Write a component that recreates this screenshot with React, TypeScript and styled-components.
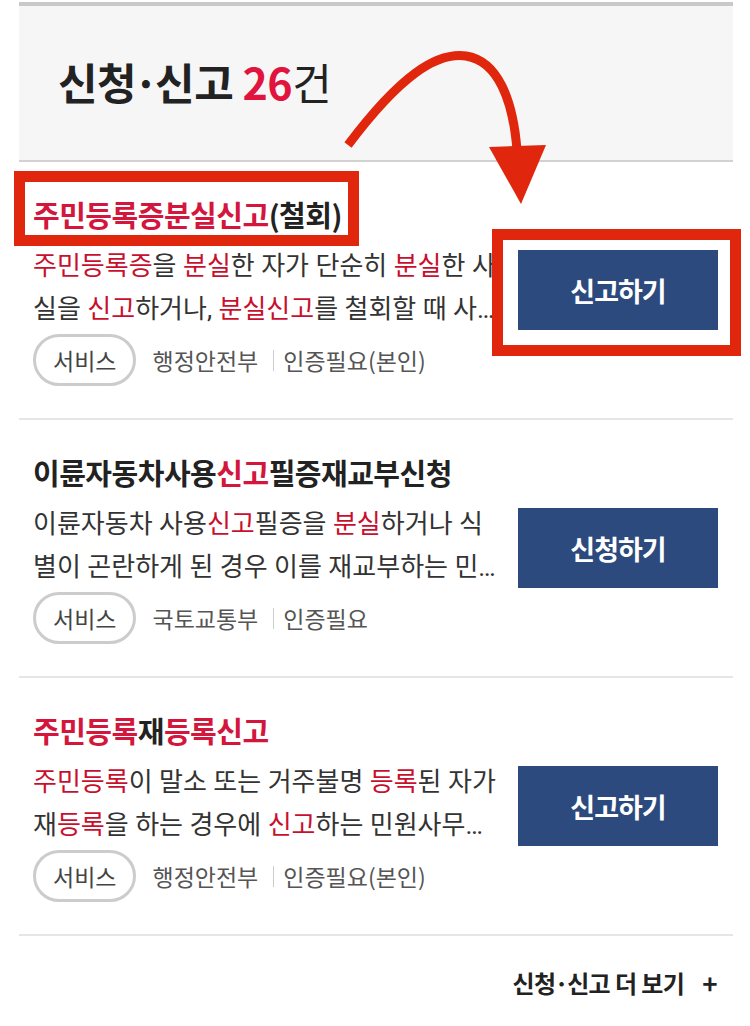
import styled, { createGlobalStyle } from 'styled-components';

const GlobalStyle = createGlobalStyle`
  html, body {
    margin: 0;
    padding: 0;
    background: #ffffff;
  }
  body {
    font-family: "Noto Sans CJK KR", "Noto Sans", sans-serif;
    color: #222222;
  }
`;

const Page = styled.div`
  position: relative;
  margin: 2px 17px 0 19px;
  border-top: 4px solid #c9c9c9;
`;

const Header = styled.div`
  display: flex;
  align-items: center;
  height: 150px;
  padding: 0 0 4px 39px;
  background: #f6f6f6;
  border-bottom: 2px solid #d2d2d2;
`;

const HeaderTitle = styled.h2`
  margin: 0;
  font-size: 43px;
  font-weight: 700;
  letter-spacing: -0.5px;
  color: #222222;
`;

interface DotProps {
  $tight: number;
}

const Dot = styled.span<DotProps>`
  margin: 0 -${(p) => p.$tight}px;
`;

const Count = styled.span`
  color: #e0143c;
`;

const CountUnit = styled.span`
  font-weight: 400;
`;

const Item = styled.div`
  position: relative;
  padding: 29px 15px 32px 14px;
  border-bottom: 2px solid #e6e6e6;
`;

const ItemTitle = styled.h3`
  margin: 0;
  font-size: 29px;
  line-height: 46px;
  font-weight: 700;
  letter-spacing: -0.5px;
  color: #222222;
`;

const TitleMark = styled.span`
  color: #d4163c;
`;

const Row = styled.div`
  display: flex;
  gap: 18px;
  margin-top: 8px;
`;

const Body = styled.div`
  width: 467px;
  flex: none;
`;

const Desc = styled.p`
  margin: 0;
  font-family: Roboto, "Noto Sans CJK KR", sans-serif;
  font-size: 26px;
  line-height: 43px;
  color: #333333;
  word-break: break-all;
  display: -webkit-box;
  -webkit-line-clamp: 2;
  -webkit-box-orient: vertical;
  overflow: hidden;
`;

const DescMark = styled.span`
  color: #c8102e;
`;

const Meta = styled.div`
  display: flex;
  align-items: center;
  margin-top: 3px;
  font-size: 23px;
  color: #555555;
`;

const Pill = styled.span`
  display: inline-flex;
  align-items: center;
  box-sizing: border-box;
  height: 52px;
  padding: 0 17px;
  border: 3px solid #cccccc;
  border-radius: 26px;
  color: #444444;
  margin-right: 16px;
`;

const Divider = styled.span`
  width: 1px;
  height: 21px;
  background: #cccccc;
  margin: 0 9px 0 15px;
`;

const ActionButton = styled.button`
  flex: none;
  width: 200px;
  height: 80px;
  margin-top: 5px;
  border: none;
  background: #2c4a7d;
  color: #ffffff;
  font-family: inherit;
  font-size: 27px;
  font-weight: 700;
  letter-spacing: -1px;
`;

interface MarkBoxProps {
  $left: number;
  $top: number;
  $width: number;
  $height: number;
}

const MarkBox = styled.div<MarkBoxProps>`
  position: absolute;
  left: ${(p) => p.$left}px;
  top: ${(p) => p.$top}px;
  width: ${(p) => p.$width}px;
  height: ${(p) => p.$height}px;
  box-sizing: border-box;
  border: 11px solid #e0260c;
  pointer-events: none;
`;

const ArrowLayer = styled.svg`
  position: absolute;
  left: -19px;
  top: -6px;
  pointer-events: none;
`;

const Footer = styled.div`
  display: flex;
  justify-content: flex-end;
  align-items: center;
  height: 40px;
  padding: 26px 16px 0 0;
  font-size: 24px;
  font-weight: 700;
  letter-spacing: -0.6px;
  color: #222222;
`;

const Plus = styled.span`
  margin-left: 18px;
  font-size: 26px;
`;

type Part = string | { r: string };

function Rich({ parts, Mark }: { parts: Part[]; Mark: typeof DescMark }) {
  return (
    <>
      {parts.map((p, i) =>
        typeof p === 'string' ? p : <Mark key={i}>{p.r}</Mark>
      )}
    </>
  );
}

interface Service {
  title: Part[];
  desc: Part[];
  org: string;
  auth: string;
  action: string;
}

const services: Service[] = [
  {
    title: [{ r: '주민등록증분실신고' }, '(철회)'],
    desc: [
      { r: '주민등록증' },
      '을 ',
      { r: '분실' },
      '한 자가 단순히 ',
      { r: '분실' },
      '한 사실을 ',
      { r: '신고' },
      '하거나, ',
      { r: '분실신고' },
      '를 철회할 때 사용하는 민원사무입니다.',
    ],
    org: '행정안전부',
    auth: '인증필요(본인)',
    action: '신고하기',
  },
  {
    title: ['이륜자동차사용', { r: '신고' }, '필증재교부신청'],
    desc: [
      '이륜자동차 사용',
      { r: '신고' },
      '필증을 ',
      { r: '분실' },
      '하거나 식별이 곤란하게 된 경우 이를 재교부하는 민원사무입니다.',
    ],
    org: '국토교통부',
    auth: '인증필요',
    action: '신청하기',
  },
  {
    title: [{ r: '주민등록' }, '재', { r: '등록신고' }],
    desc: [
      { r: '주민등록' },
      '이 말소 또는 거주불명 ',
      { r: '등록' },
      '된 자가 재',
      { r: '등록' },
      '을 하는 경우에 ',
      { r: '신고' },
      '하는 민원사무를 처리합니다.',
    ],
    org: '행정안전부',
    auth: '인증필요(본인)',
    action: '신고하기',
  },
];

export default function App() {
  return (
    <>
      <GlobalStyle />
      <Page>
        <Header>
          <HeaderTitle>
            신청<Dot $tight={3}>·</Dot>신고 <Count>26</Count>
            <CountUnit>건</CountUnit>
          </HeaderTitle>
        </Header>
        {services.map((s, i) => (
          <Item key={i}>
            <ItemTitle>
              <Rich parts={s.title} Mark={TitleMark} />
            </ItemTitle>
            <Row>
              <Body>
                <Desc>
                  <Rich parts={s.desc} Mark={DescMark} />
                </Desc>
                <Meta>
                  <Pill>서비스</Pill>
                  {s.org}
                  <Divider />
                  {s.auth}
                </Meta>
              </Body>
              <ActionButton>{s.action}</ActionButton>
            </Row>
            {i === 0 && (
              <>
                <MarkBox $left={-5} $top={9} $width={345} $height={75} />
                <MarkBox $left={473} $top={67} $width={249} $height={127} />
              </>
            )}
          </Item>
        ))}
        <Footer>
          신청<Dot $tight={1}>·</Dot>신고 더 보기<Plus>+</Plus>
        </Footer>
        <ArrowLayer width={750} height={220} viewBox="0 0 750 220">
          <path
            d="M348 145 C400 76 436 52 466 56 C498 61 513 100 517 150"
            fill="none"
            stroke="#e0260c"
            strokeWidth={9}
          />
          <polygon points="489,147 546,145 521,204" fill="#e0260c" />
        </ArrowLayer>
      </Page>
    </>
  );
}
